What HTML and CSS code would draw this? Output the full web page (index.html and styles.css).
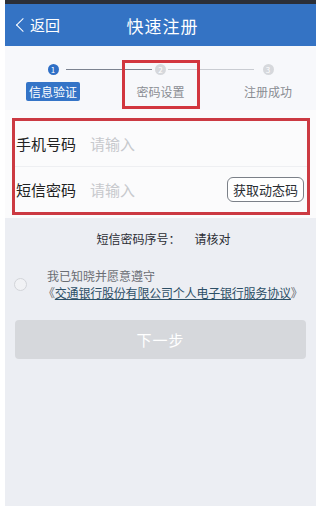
FILE: index.html
```html
<!DOCTYPE html>
<html>
<head>
    <meta charset="UTF-8">
    <meta name="viewport" content="width=device-width, initial-scale=1.0">
    <title>快速注册</title>
    <link rel="stylesheet" href="styles.css">
</head>
<body>
<div class="phone">
    <div class="status-bar"></div>
    <div class="header">
        <span class="back"><span class="chev"></span>返回</span>
        <h1>快速注册</h1>
    </div>

    <div class="steps">
        <div class="step active">
            <span class="dot">1</span>
            <span class="label">信息验证</span>
        </div>
        <div class="step">
            <span class="dot">2</span>
            <span class="label">密码设置</span>
            <div class="mark"></div>
        </div>
        <div class="step">
            <span class="dot">3</span>
            <span class="label">注册成功</span>
        </div>
        <div class="line line-1"></div>
        <div class="line line-2"></div>
    </div>

    <div class="form">
        <div class="form-box">
            <div class="row">
                <span class="name">手机号码</span>
                <span class="hint">请输入</span>
            </div>
            <div class="row">
                <span class="name">短信密码</span>
                <span class="hint">请输入</span>
                <button class="code-button">获取动态码</button>
            </div>
        </div>
    </div>

    <div class="serial">短信密码序号：<span class="check">请核对</span></div>

    <div class="agree">
        <span class="radio"></span>
        <div class="agree-text">
            <div class="know">我已知晓并愿意遵守</div>
            <div class="protocol">《<u>交通银行股份有限公司个人电子银行服务协议</u>》</div>
        </div>
    </div>

    <button class="next-button">下一步</button>
</div>
</body>
</html>
```

FILE: styles.css
```css
body {
    margin: 0;
    background-color: #ffffff;
    font-family: "Noto Sans CJK SC", "Noto Sans", sans-serif;
}
.phone {
    width: 311px;
    margin-left: 5px;
    min-height: 506px;
    background-color: #eceef3;
}
.status-bar {
    height: 4px;
    background-color: #2b2f38;
}
.header {
    position: relative;
    height: 42px;
    background-color: #3473c4;
    color: #fff;
    display: flex;
    align-items: center;
    justify-content: center;
}
.header h1 {
    margin: 0 0 0 4px;
    font-size: 17px;
    font-weight: normal;
    letter-spacing: 1px;
}
.back {
    position: absolute;
    left: 9px;
    top: 10px;
    font-size: 15px;
    display: flex;
    align-items: center;
}
.chev {
    width: 9px;
    height: 9px;
    border-left: 1.5px solid #fff;
    border-bottom: 1.5px solid #fff;
    transform: rotate(45deg);
    margin: 0 2px 0 4px;
}

/* step bar */
.steps {
    position: relative;
    height: 64px;
    background-color: #f7f8fb;
    display: flex;
    justify-content: space-between;
    padding: 0 21px 0 21px;
}
.step {
    position: relative;
    width: 54px;
    display: flex;
    flex-direction: column;
    align-items: center;
    padding-top: 18px;
    z-index: 1;
}
.dot {
    width: 11px;
    height: 11px;
    border-radius: 50%;
    background-color: #d6d8dc;
    color: #fff;
    font-size: 8px;
    line-height: 11px;
    text-align: center;
}
.step .label {
    margin-top: 7px;
    font-size: 12px;
    color: #8a8d93;
    padding: 1px 3px;
    line-height: 17px;
}
.step.active .dot {
    background-color: #2f6fc6;
}
.step.active .label {
    background-color: #3474c7;
    color: #fff;
    border-radius: 2px;
}
.line {
    position: absolute;
    top: 23px;
    height: 1px;
    background-color: #c9ccd2;
}
.line-1 {
    left: 61px;
    width: 86px;
    background-color: #7c8390;
}
.line-2 {
    left: 163px;
    width: 86px;
}
.mark {
    position: absolute;
    left: -12px;
    top: 14px;
    width: 72px;
    height: 43px;
    border: 3px solid #d2363f;
}

/* form */
.form {
    background-color: #fbfbfc;
    padding: 8px 6px 3px 7px;
}
.form-box {
    border: 3px solid #cc3a42;
}
.row {
    height: 45px;
    display: flex;
    align-items: center;
    padding-left: 1px;
    padding-right: 3px;
}
.row + .row {
    border-top: 1px solid #eeeff2;
}
.name {
    width: 74px;
    font-size: 15px;
    color: #222;
}
.hint {
    flex: 1;
    font-size: 15px;
    color: #c7c9cd;
}
.code-button {
    font-family: inherit;
    font-size: 13px;
    color: #2a2d33;
    background-color: #fff;
    border: 1px solid #7b8088;
    border-radius: 6px;
    padding: 2px 5px;
    height: 25px;
}

.serial {
    text-align: center;
    font-size: 12px;
    color: #2b2d33;
    margin-top: 12px;
    padding-left: 6px;
}
.check {
    margin-left: 14px;
}

.agree {
    display: flex;
    align-items: center;
    margin-top: 20px;
    padding-left: 9px;
}
.radio {
    width: 11px;
    height: 11px;
    border: 1px solid #d2d4d9;
    border-radius: 50%;
    background-color: #f1f2f5;
    margin-right: 17px;
}
.agree-text {
    font-size: 12px;
    line-height: 17px;
    white-space: nowrap;
}
.know {
    color: #6a6d73;
    margin-left: 3px;
}
.protocol {
    color: #6a6d73;
    margin-left: -1px;
    letter-spacing: -0.2px;
}
.protocol u {
    color: #2c4f66;
}

.next-button {
    display: block;
    width: 291px;
    height: 39px;
    margin: 19px auto 0 10px;
    background-color: #d6d8dc;
    border: none;
    border-radius: 4px;
    color: #fff;
    font-family: inherit;
    font-size: 15px;
    letter-spacing: 1px;
}
```
